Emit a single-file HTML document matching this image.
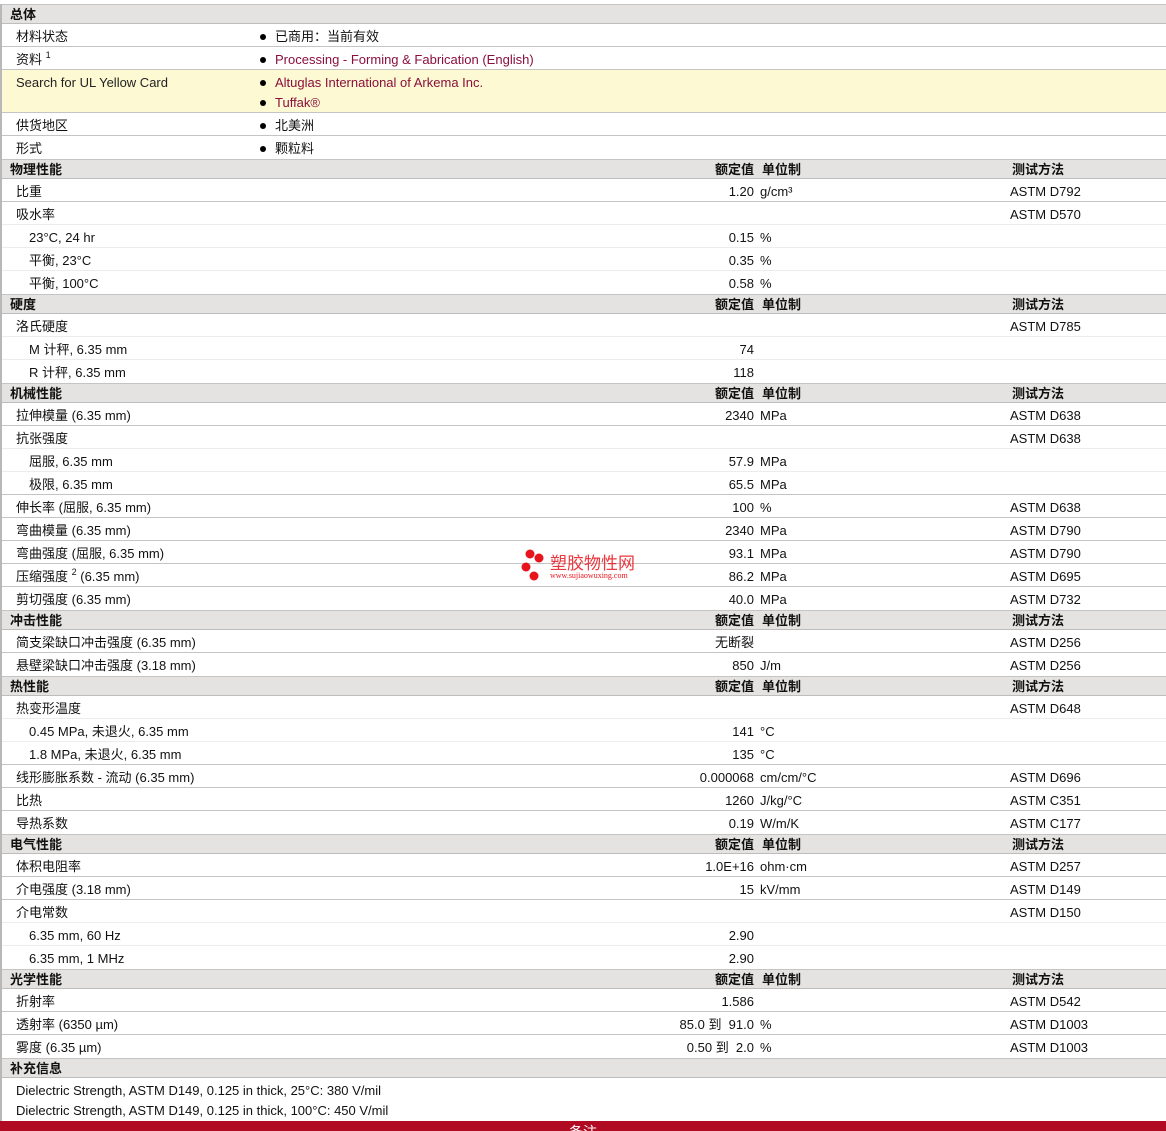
<!DOCTYPE html>
<html><head><meta charset="utf-8">
<style>
*{margin:0;padding:0;box-sizing:border-box}
html,body{width:1166px;height:1131px;overflow:hidden;background:#fff;font-family:"Liberation Sans","Noto Sans CJK SC",sans-serif;font-size:13px;color:#111}
#wrap{position:absolute;left:0;top:4px;width:1166px;border-left:2px solid #b8b8b8}
.r{position:relative;height:23px;border-bottom:1px solid #c4c4c4;background:#fff}
.r.s{border-bottom:1px solid #ececec}
.h{position:relative;height:20px;background:#e4e3e1;border-top:1px solid #c4c4c4;border-bottom:1px solid #bdbdbd;font-weight:bold}
.h span{position:absolute;top:1px;line-height:18px}
.r span{position:absolute;top:2px;line-height:22px;white-space:nowrap}
.l{left:14px}.i{left:27px}
.v{right:412px;text-align:right}
.u{left:758px}
.m{left:1008px}
.b{left:258px}
.b::before{content:"";position:absolute;left:0;top:8px;width:6px;height:6px;border-radius:50%;background:#000}
.b em{font-style:normal;margin-left:15px}
.a{color:#8a0f3c}
.y{height:43px;background:#fdf9d2}
sup{font-size:9px;vertical-align:6px;line-height:0}
.n{height:43px}
.n span{position:static!important;display:block;padding-left:14px}
#red{position:absolute;left:0;top:1121px;width:1166px;height:10px;background:#b00b22;color:#fff;text-align:center;font-size:14px;line-height:22px;overflow:hidden}
#logo{position:absolute;left:520px;top:549px;width:130px;height:34px}
</style></head><body>
<div id="wrap">
<div class="h"><span class="l" style="left:8px">总体</span></div>
<div class="r"><span class="l">材料状态</span><span class="b"><em>已商用：当前有效</em></span></div>
<div class="r"><span class="l">资料 <sup>1</sup></span><span class="b"><em class="a">Processing - Forming &amp; Fabrication (English)</em></span></div>
<div class="r y"><span class="l" style="color:#222">Search for UL Yellow Card</span><span class="b"><em class="a">Altuglas International of Arkema Inc.</em></span><span class="b" style="top:22px"><em class="a">Tuffak®</em></span></div>
<div class="r"><span class="l">供货地区</span><span class="b"><em>北美洲</em></span></div>
<div class="r" style="border-bottom:none"><span class="l">形式</span><span class="b"><em>颗粒料</em></span></div>

<div class="h"><span style="left:8px">物理性能</span><span style="right:412px">额定值</span><span style="left:760px">单位制</span><span style="left:1010px">测试方法</span></div>
<div class="r"><span class="l">比重</span><span class="v">1.20</span><span class="u">g/cm³</span><span class="m">ASTM D792</span></div>
<div class="r s"><span class="l">吸水率</span><span class="m">ASTM D570</span></div>
<div class="r s"><span class="i">23°C, 24 hr</span><span class="v">0.15</span><span class="u">%</span></div>
<div class="r s"><span class="i">平衡, 23°C</span><span class="v">0.35</span><span class="u">%</span></div>
<div class="r" style="border-bottom:none"><span class="i">平衡, 100°C</span><span class="v">0.58</span><span class="u">%</span></div>

<div class="h"><span style="left:8px">硬度</span><span style="right:412px">额定值</span><span style="left:760px">单位制</span><span style="left:1010px">测试方法</span></div>
<div class="r s"><span class="l">洛氏硬度</span><span class="m">ASTM D785</span></div>
<div class="r s"><span class="i">M 计秤, 6.35 mm</span><span class="v">74</span></div>
<div class="r" style="border-bottom:none"><span class="i">R 计秤, 6.35 mm</span><span class="v">118</span></div>

<div class="h"><span style="left:8px">机械性能</span><span style="right:412px">额定值</span><span style="left:760px">单位制</span><span style="left:1010px">测试方法</span></div>
<div class="r"><span class="l">拉伸模量 (6.35 mm)</span><span class="v">2340</span><span class="u">MPa</span><span class="m">ASTM D638</span></div>
<div class="r s"><span class="l">抗张强度</span><span class="m">ASTM D638</span></div>
<div class="r s"><span class="i">屈服, 6.35 mm</span><span class="v">57.9</span><span class="u">MPa</span></div>
<div class="r"><span class="i">极限, 6.35 mm</span><span class="v">65.5</span><span class="u">MPa</span></div>
<div class="r"><span class="l">伸长率 (屈服, 6.35 mm)</span><span class="v">100</span><span class="u">%</span><span class="m">ASTM D638</span></div>
<div class="r"><span class="l">弯曲模量 (6.35 mm)</span><span class="v">2340</span><span class="u">MPa</span><span class="m">ASTM D790</span></div>
<div class="r"><span class="l">弯曲强度 (屈服, 6.35 mm)</span><span class="v">93.1</span><span class="u">MPa</span><span class="m">ASTM D790</span></div>
<div class="r"><span class="l">压缩强度 <sup>2</sup> (6.35 mm)</span><span class="v">86.2</span><span class="u">MPa</span><span class="m">ASTM D695</span></div>
<div class="r" style="border-bottom:none"><span class="l">剪切强度 (6.35 mm)</span><span class="v">40.0</span><span class="u">MPa</span><span class="m">ASTM D732</span></div>

<div class="h"><span style="left:8px">冲击性能</span><span style="right:412px">额定值</span><span style="left:760px">单位制</span><span style="left:1010px">测试方法</span></div>
<div class="r"><span class="l">简支梁缺口冲击强度 (6.35 mm)</span><span class="v">无断裂</span><span class="m">ASTM D256</span></div>
<div class="r" style="border-bottom:none"><span class="l">悬壁梁缺口冲击强度 (3.18 mm)</span><span class="v">850</span><span class="u">J/m</span><span class="m">ASTM D256</span></div>

<div class="h"><span style="left:8px">热性能</span><span style="right:412px">额定值</span><span style="left:760px">单位制</span><span style="left:1010px">测试方法</span></div>
<div class="r s"><span class="l">热变形温度</span><span class="m">ASTM D648</span></div>
<div class="r s"><span class="i">0.45 MPa, 未退火, 6.35 mm</span><span class="v">141</span><span class="u">°C</span></div>
<div class="r"><span class="i">1.8 MPa, 未退火, 6.35 mm</span><span class="v">135</span><span class="u">°C</span></div>
<div class="r"><span class="l">线形膨胀系数 - 流动 (6.35 mm)</span><span class="v">0.000068</span><span class="u">cm/cm/°C</span><span class="m">ASTM D696</span></div>
<div class="r"><span class="l">比热</span><span class="v">1260</span><span class="u">J/kg/°C</span><span class="m">ASTM C351</span></div>
<div class="r" style="border-bottom:none"><span class="l">导热系数</span><span class="v">0.19</span><span class="u">W/m/K</span><span class="m">ASTM C177</span></div>

<div class="h"><span style="left:8px">电气性能</span><span style="right:412px">额定值</span><span style="left:760px">单位制</span><span style="left:1010px">测试方法</span></div>
<div class="r"><span class="l">体积电阻率</span><span class="v">1.0E+16</span><span class="u">ohm·cm</span><span class="m">ASTM D257</span></div>
<div class="r"><span class="l">介电强度 (3.18 mm)</span><span class="v">15</span><span class="u">kV/mm</span><span class="m">ASTM D149</span></div>
<div class="r s"><span class="l">介电常数</span><span class="m">ASTM D150</span></div>
<div class="r s"><span class="i">6.35 mm, 60 Hz</span><span class="v">2.90</span></div>
<div class="r" style="border-bottom:none"><span class="i">6.35 mm, 1 MHz</span><span class="v">2.90</span></div>

<div class="h"><span style="left:8px">光学性能</span><span style="right:412px">额定值</span><span style="left:760px">单位制</span><span style="left:1010px">测试方法</span></div>
<div class="r"><span class="l">折射率</span><span class="v">1.586</span><span class="m">ASTM D542</span></div>
<div class="r"><span class="l">透射率 (6350 µm)</span><span class="v">85.0 到 &nbsp;91.0</span><span class="u">%</span><span class="m">ASTM D1003</span></div>
<div class="r" style="border-bottom:none"><span class="l">雾度 (6.35 µm)</span><span class="v">0.50 到 &nbsp;2.0</span><span class="u">%</span><span class="m">ASTM D1003</span></div>

<div class="h"><span style="left:8px">补充信息</span></div>
<div class="r n" style="border-bottom:none;padding-top:3px"><span style="line-height:20px">Dielectric Strength, ASTM D149, 0.125 in thick, 25°C: 380 V/mil</span><span style="line-height:20px">Dielectric Strength, ASTM D149, 0.125 in thick, 100°C: 450 V/mil</span></div>
</div>

<svg id="logo" viewBox="0 0 130 34">
<circle cx="10" cy="5" r="4.5" fill="#e8141c"/><circle cx="19" cy="9" r="4.5" fill="#e8141c"/>
<circle cx="6" cy="18" r="4.5" fill="#e8141c"/><circle cx="14" cy="27" r="4.5" fill="#e8141c"/>
<text x="30" y="20" font-family="Noto Sans CJK SC, sans-serif" font-size="17" fill="#e8141c" fill-opacity="0.85">塑胶物性网</text>
<text x="30" y="29" font-family="Liberation Serif, serif" font-size="8" fill="#e8141c">www.sujiaowuxing.com</text>
</svg>
<div id="red">备注</div>
</body></html>
